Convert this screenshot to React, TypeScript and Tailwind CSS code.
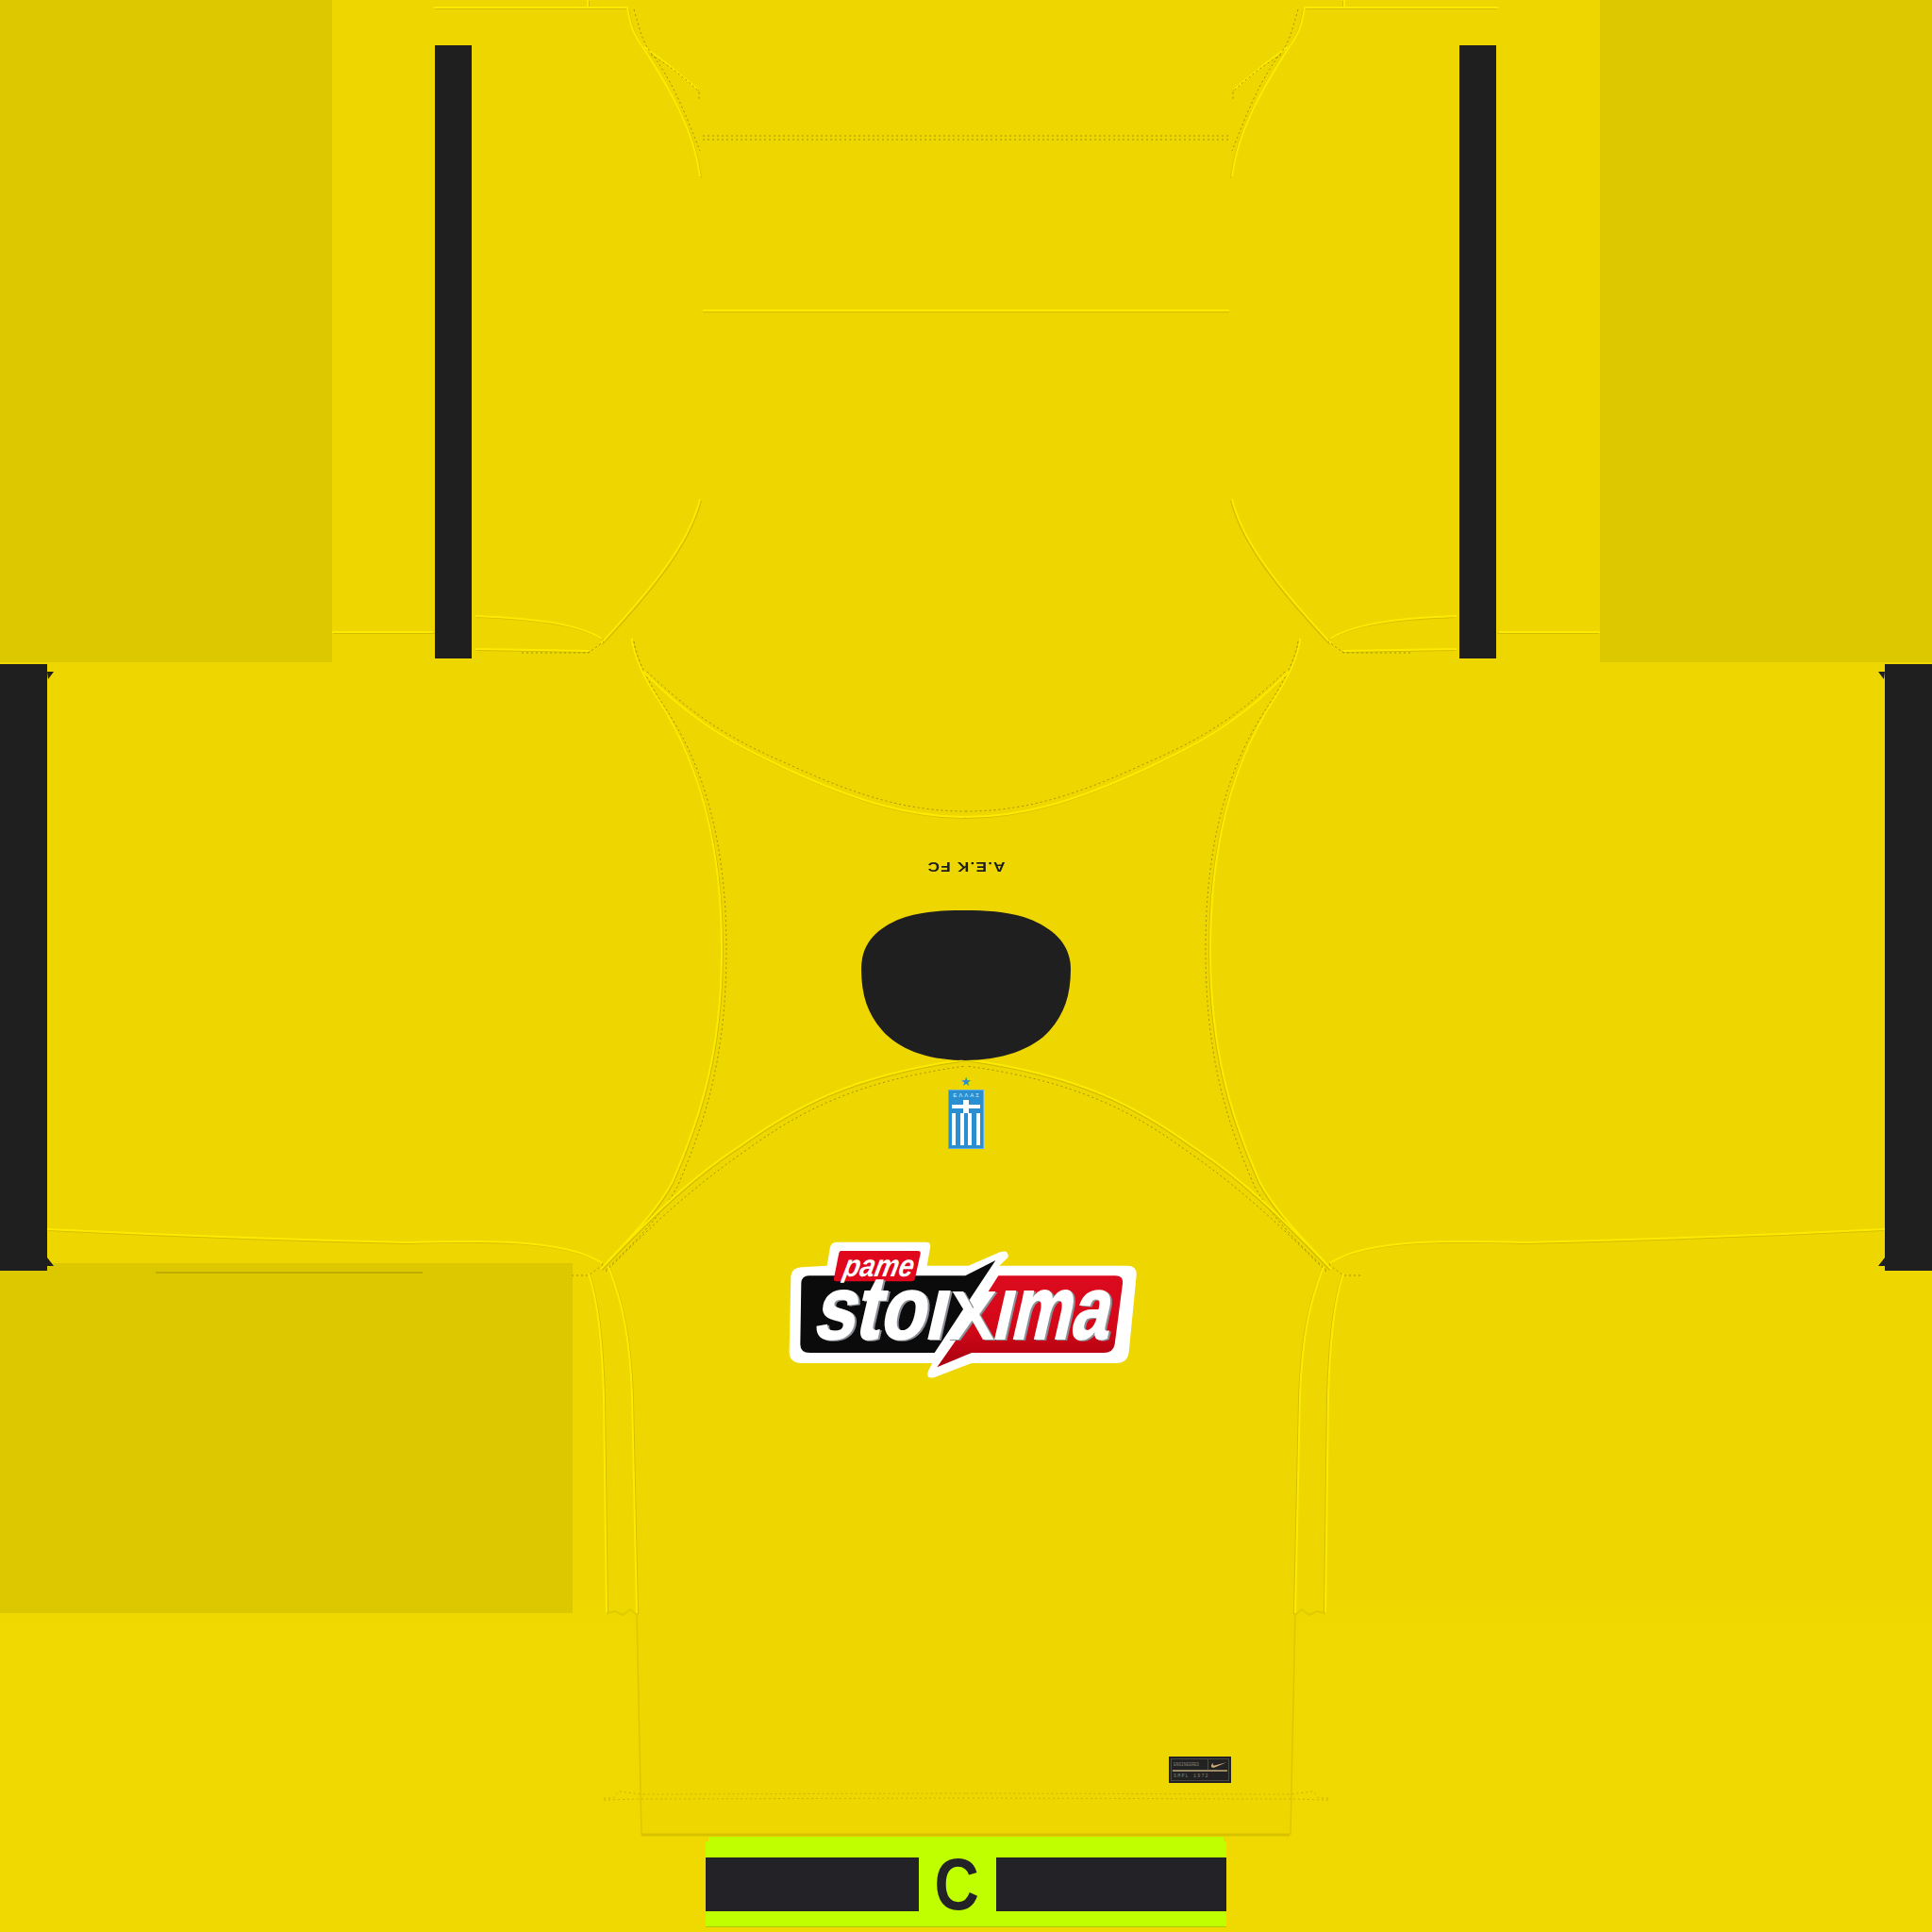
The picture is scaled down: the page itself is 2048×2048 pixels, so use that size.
import React from "react";
import { SiNike } from "react-icons/si";

const Seam = ({ d }: { d: string }) => (
    <>
        <path d={d} fill="none" stroke="#d2be00" strokeWidth={1.5} transform="translate(1.2 1.2)" />
        <path d={d} fill="none" stroke="#fdea00" strokeWidth={2} />
    </>
);

const Stitch = ({ d, faint }: { d: string; faint?: boolean }) => (
    <path d={d} fill="none" stroke={faint ? "#c8b600" : "#a39400"} strokeWidth={1} strokeDasharray="2 3" />
);

// one half of the shirt's seams, drawn twice (second time mirrored)
const SeamHalf = () => (
    <>
        <Seam d="M460 8 L665 8 M623 0 L623 8" />
        <Seam d="M665 8 C668 25 670 35 683 52 C700 80 735 130 742 187" />
        <Seam d="M683 50 C705 65 725 82 740 95" />
        <Stitch d="M672 10 C678 30 680 42 690 56 C715 88 730 130 742 160" />
        <Stitch d="M690 58 C710 70 725 82 741 97 L741 105" />
        <Seam d="M742 529 C732 570 700 615 637 682" />
        <Seam d="M352 670 L459 670 M504 688 L624 690" />
        <Seam d="M504 653 C560 655 610 660 638 677" />
        <Stitch d="M553 692 L624 692 L640 680" />
        <Seam d="M670 677 C672 700 690 730 700 745 C735 800 765 880 765 1006 C765 1110 745 1180 712 1254 C695 1285 665 1315 637 1345" />
        <Stitch d="M672 680 C676 705 695 735 705 750 C745 810 770 890 770 1006 C770 1110 752 1180 718 1258 C700 1290 670 1320 640 1348" />
        <Seam d="M682 712 C740 770 780 790 836 816 C910 850 965 866 1024 866" />
        <Stitch d="M686 712 C745 768 785 788 840 812 C912 845 965 860 1024 860" />
        <Seam d="M637 1345 C690 1290 730 1250 784 1215 C840 1175 900 1140 1024 1123" />
        <Stitch d="M642 1348 C695 1295 735 1258 790 1220 C845 1180 905 1146 1024 1130" />
        <Seam d="M50 1303 C150 1308 300 1314 432 1317 C500 1315 600 1312 638 1339" />
        <Stitch d="M606 1352 L624 1352 L640 1340" />
        <Seam d="M624 1350 C634 1380 638 1420 640 1480 L643 1710" />
        <Seam d="M645 1343 C660 1380 668 1420 670 1480 L675 1710" />
        <path d="M643 1710 L652 1708 L660 1712 L668 1706 L674 1711" fill="none" stroke="#dfcb00" strokeWidth={2} />
        <path d="M675 1710 L680 1945" fill="none" stroke="#dcc600" strokeWidth={1.5} />
        <Stitch faint d="M640 1906 L650 1906 L656 1899 L680 1902 L1024 1901 M640 1908 L680 1907 L1024 1906" />
    </>
);

const ShirtSeams = () => (
    <svg className="absolute inset-0 w-full h-full" viewBox="0 0 2048 2048">
        {/* shirt tail is a touch duller than the sheet around it */}
        <path d="M675 1700 L1373 1700 L1367 1945 L680 1945 Z" fill="#eed700" />
        <SeamHalf />
        <g transform="matrix(-1 0 0 1 2048 0)">
            <SeamHalf />
        </g>
        <Stitch d="M745 144 L1303 144 M745 148 L1303 148" />
        <path d="M745 329 L1303 329" fill="none" stroke="#fdea00" strokeWidth={2} />
        <path d="M745 331 L1303 331" fill="none" stroke="#d2be00" strokeWidth={1} />
        <path d="M680 1945 L1367 1945" fill="none" stroke="#d8c200" strokeWidth={3} />
        <path d="M165 1349 L448 1349" fill="none" stroke="#bfac00" strokeWidth={2} />
        {/* collar and stripe notches */}
        <path d="M50 712 L57 712 L51 720 Z M50 1333 L57 1342 L50 1342 Z M1998 712 L1991 712 L1997 720 Z M1998 1333 L1991 1342 L1998 1342 Z" fill="#1f1f1f" />
        <path
            d="M913 1027 C913 1000 930 982 960 972 C985 965 1005 965 1023 965 C1045 965 1065 966 1085 972 C1115 982 1135 1000 1135 1027 C1135 1055 1128 1075 1113 1092 C1095 1113 1060 1124 1023 1124 C985 1124 953 1113 935 1092 C920 1075 913 1055 913 1027 Z"
            fill="#1f1f1f"
        />
    </svg>
);

const SponsorLogo = () => (
    <svg className="absolute left-[800px] top-[1290px] w-[440px] h-[180px]" viewBox="0 0 1320 540">
        <defs>
            <linearGradient id="red" x1="0" y1="0" x2="0" y2="1">
                <stop offset="0" stopColor="#dc0a1e" />
                <stop offset="0.55" stopColor="#d40818" />
                <stop offset="1" stopColor="#a80010" />
            </linearGradient>
        </defs>
        <path
            d="M240 95 Q245 80 262 80 L545 80 Q562 80 558 98 L548 155 L680 155 L780 112 Q808 102 806 128 L778 155 L1185 155 Q1216 155 1214 185 L1190 430 Q1186 465 1150 465 L690 465 L572 510 Q543 518 552 490 L565 465 L150 465 Q108 465 110 425 L115 190 Q118 160 150 160 L230 155 Z"
            fill="#ffffff"
        />
        <path d="M172 187 L670 187 L766 138 L572 432 L175 432 Q145 432 145 405 L148 210 Q150 187 172 187 Z" fill="#0b0b0b" />
        <path d="M775 187 L1148 187 Q1173 187 1170 212 L1145 405 Q1140 432 1110 432 L690 432 L580 478 L690 320 Z" fill="url(#red)" />
        <path d="M275 108 L518 108 Q529 108 527 118 L510 195 Q508 205 498 205 L260 205 Q250 205 252 195 L268 115 Q270 108 275 108 Z" fill="#e0061c" />
        <text
            transform="translate(278 188) skewX(-12) scale(1 1.15)"
            fontFamily="Liberation Sans, sans-serif"
            fontWeight="700"
            fontStyle="italic"
            fontSize="86"
            textLength="222"
            lengthAdjust="spacingAndGlyphs"
            fill="#ffffff"
        >
            pame
        </text>
        <g
            fill="#ffffff"
            stroke="#ffffff"
            strokeWidth={4}
            fontFamily="Liberation Sans, sans-serif"
            fontWeight="700"
            className="[filter:drop-shadow(6px_3px_0_#8b9097)]"
        >
            <text transform="translate(182 388) skewX(-13) scale(1 1.42)" fontSize="200" textLength="420" lengthAdjust="spacingAndGlyphs">
                stoı
            </text>
            <text transform="translate(612 390) skewX(-4)" fontSize="222" strokeWidth={0} textLength="150" lengthAdjust="spacingAndGlyphs">
                X
            </text>
            <text transform="translate(750 388) skewX(-13) scale(1 1.42)" fontSize="200" textLength="368" lengthAdjust="spacingAndGlyphs">
                ıma
            </text>
        </g>
    </svg>
);

const GreekCrest = () => (
    <div className="absolute left-[1005px] top-[1140px] w-[38px] flex flex-col items-center font-['Liberation_Sans',sans-serif]">
        <span className="text-[#2a8fd0] text-[13px] leading-[13px] h-[15px]">★</span>
        <div className="relative w-[38px] h-[63px] bg-[#2a8fd0] border border-[#63aede] flex flex-col items-center">
            <span className="text-[#d7ecf8] text-[6px] leading-[8px] mt-[1px] tracking-[2px] pl-[2px]">ΕΛΛΑΣ</span>
            <div className="relative w-[30px] h-[4px] mt-[6px] bg-white">
                <div className="absolute left-[12px] top-[-5px] w-[6px] h-[14px] bg-white" />
            </div>
            <div className="flex justify-between w-[30px] mt-[5px]">
                <div className="w-[4px] h-[34px] bg-white" />
                <div className="w-[4px] h-[34px] bg-white" />
                <div className="w-[4px] h-[34px] bg-white" />
                <div className="w-[4px] h-[34px] bg-white" />
            </div>
        </div>
    </div>
);

const NikeTag = () => (
    <div className="absolute left-[1239px] top-[1862px] w-[66px] h-[28px] bg-[#222222] p-[2px] font-['Liberation_Mono',monospace]">
        <div className="h-full border border-[#4b4a42] flex flex-col">
            <div className="flex items-center h-[11px]">
                <span className="w-[38px] pl-[2px] text-[4.5px] leading-[9px] text-[#8c8068] whitespace-nowrap overflow-hidden">ENGINEERED</span>
                <div className="w-px h-[11px] bg-[#4b4a42]" />
                <SiNike className="ml-[3px] text-[#d1ad7c]" size={16} />
            </div>
            <div className="h-[2px] mx-[1px] bg-[#9c8a65]" />
            <span className="pl-[2px] mt-[1px] text-[5px] leading-[8px] tracking-[1.2px] text-[#8c8068] whitespace-nowrap">SMPL 1972</span>
        </div>
    </div>
);

const CaptainBand = () => (
    <div className="w-[552px] h-[96px] flex items-start pt-[22px] bg-[#bfff00] border-b border-[#a9c800] [clip-path:polygon(3px_0,549px_0,549px_5px,552px_5px,552px_96px,0_96px,0_5px,3px_5px)]">
        <div className="w-[226px] h-[57px] bg-[#232226]" />
        <span className="w-[82px] text-center text-[#232226] text-[78px] leading-[57px] font-bold font-['Liberation_Sans',sans-serif] pr-[2px] scale-x-[0.84]">C</span>
        <div className="flex-1 h-[57px] bg-[#232226]" />
    </div>
);

const App = () => {
    return (
        <div className="relative w-[2048px] h-[2048px] overflow-hidden bg-[linear-gradient(to_bottom,#eed700_0%,#eed700_82%,#f0d900_85%,#f0d900_100%)] flex flex-col">
            {/* top row: sleeve panels and sleeve stripes */}
            <div className="flex justify-between h-[702px] shrink-0">
                <div className="flex">
                    <div className="w-[352px] h-full bg-[#ddc800]" />
                    <div className="w-[39px] h-[650px] mt-[48px] ml-[109px] bg-[#1f1f1f]" />
                </div>
                <div className="flex">
                    <div className="w-[39px] h-[650px] mt-[48px] mr-[110px] bg-[#1f1f1f]" />
                    <div className="w-[352px] h-full bg-[#ddc800]" />
                </div>
            </div>

            {/* side stripes */}
            <div className="flex justify-between h-[635px] mt-[2px] shrink-0">
                <div className="w-[50px] h-[643px] bg-[#1f1f1f] z-10" />
                <div className="w-[50px] h-[643px] bg-[#1f1f1f] z-10" />
            </div>

            <div className="w-[607px] h-[371px] bg-[#ddc800] shrink-0" />

            {/* captain band sits at the foot of the sheet */}
            <div className="flex justify-center pt-[237px]">
                <CaptainBand />
            </div>

            <ShirtSeams />

            <span className="absolute left-[981px] top-[912px] w-[86px] text-center rotate-180 scale-x-[1.15] tracking-[1px] text-[#1c1c1c] text-[15px] leading-[14px] font-bold whitespace-nowrap font-['Liberation_Sans',sans-serif]">
                A.E.K FC
            </span>
            <GreekCrest />
            <SponsorLogo />
            <NikeTag />
        </div>
    );
};

export default App;
